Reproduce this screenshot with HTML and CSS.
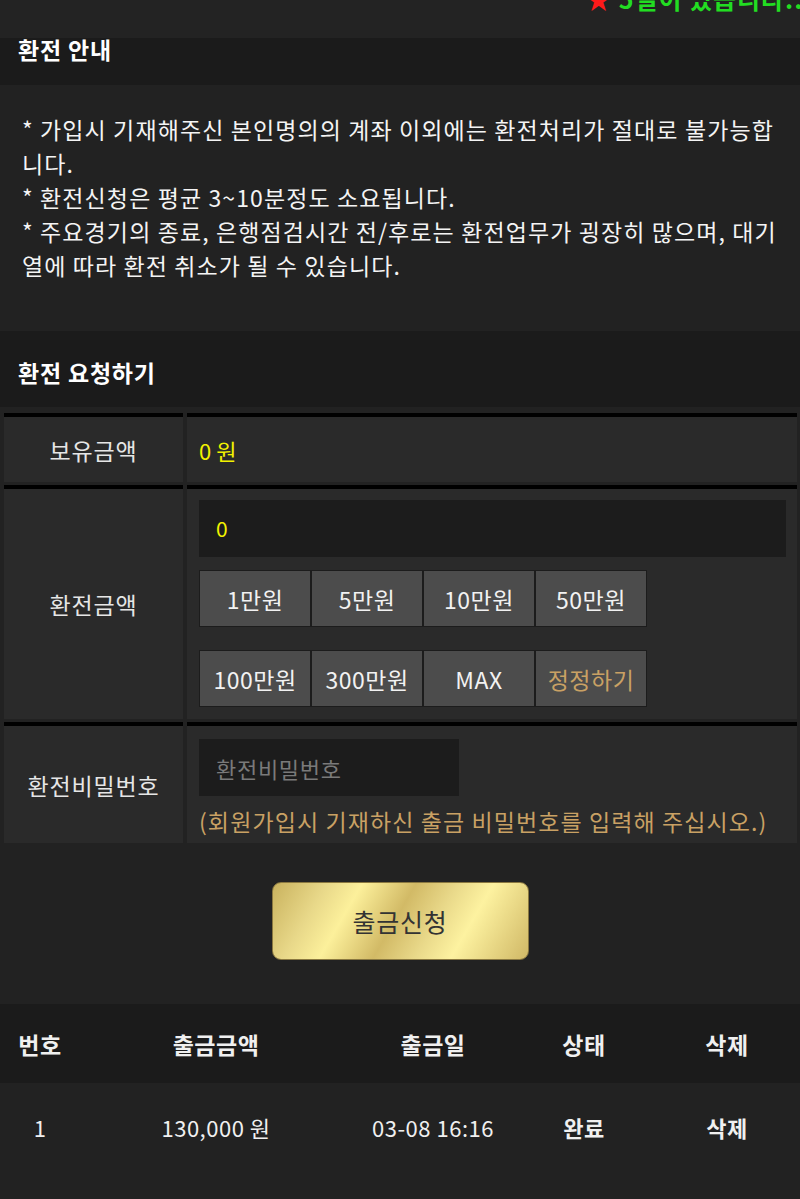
FILE: index.html
```html
<!DOCTYPE html>
<html>
<head>
  <title>환전 신청</title>
  <link rel="stylesheet" href="styles.css">
</head>
<body>
  <div class="topbar">
    <div class="notice-line"><span class="star">★</span> 5일이 있습니다.:</div>
  </div>

  <div class="section-title first">환전 안내</div>
  <div class="guide">
    <p>* 가입시 기재해주신 본인명의의 계좌 이외에는 환전처리가 절대로 불가능합니다.</p>
    <p>* 환전신청은 평균 3~10분정도 소요됩니다.</p>
    <p>* 주요경기의 종료, 은행점검시간 전/후로는 환전업무가 굉장히 많으며, 대기열에 따라 환전 취소가 될 수 있습니다.</p>
  </div>

  <div class="section-title second">환전 요청하기</div>
  <div class="form-table">
    <div class="cell label row-money">보유금액</div>
    <div class="cell value row-money"><span class="yellow">0 원</span></div>

    <div class="cell label">환전금액</div>
    <div class="cell value amount-cell">
      <div class="amount-input">0</div>
      <div class="btn-group">
        <button type="button" class="amt">1만원</button>
        <button type="button" class="amt">5만원</button>
        <button type="button" class="amt">10만원</button>
        <button type="button" class="amt">50만원</button>
      </div>
      <div class="btn-group">
        <button type="button" class="amt">100만원</button>
        <button type="button" class="amt">300만원</button>
        <button type="button" class="amt">MAX</button>
        <button type="button" class="amt gold">정정하기</button>
      </div>
    </div>

    <div class="cell label">환전비밀번호</div>
    <div class="cell value pw-cell">
      <input type="password" class="pw-input" placeholder="환전비밀번호">
      <div class="hint">(회원가입시 기재하신 출금 비밀번호를 입력해 주십시오.)</div>
    </div>
  </div>

  <div class="submit-wrap">
    <button type="button" class="submit">출금신청</button>
  </div>

  <div class="history">
    <div class="history-row head">
      <div>번호</div>
      <div>출금금액</div>
      <div>출금일</div>
      <div>상태</div>
      <div>삭제</div>
    </div>
    <div class="history-row">
      <div>1</div>
      <div>130,000 원</div>
      <div>03-08 16:16</div>
      <div class="bold">완료</div>
      <div class="bold">삭제</div>
    </div>
  </div>
</body>
</html>
```

FILE: styles.css
```css
body {
  margin: 0;
  background-color: #222222;
  color: #f0f0f0;
  font-family: "Noto Sans CJK KR", "Noto Sans", sans-serif;
}
.topbar {
  height: 38px;
  overflow: hidden;
  background-color: #232323;
}
.notice-line {
  margin-top: -18px;
  padding-left: 586px;
  white-space: nowrap;
  font-size: 25px;
  line-height: 32px;
  letter-spacing: 1px;
  color: #22dd22;
  font-weight: bold;
}
.star {
  color: #ff1a1a;
}
.section-title {
  background-color: #1b1b1b;
  font-size: 23px;
  letter-spacing: 0.8px;
  font-weight: bold;
  color: #ffffff;
  padding-left: 18px;
}
.section-title.first {
  height: 47px;
  line-height: 22px;
}
.section-title.second {
  height: 76px;
  line-height: 82px;
}
.guide {
  padding: 27px 22px 49px 22px;
  font-size: 23px;
  letter-spacing: 1.1px;
  line-height: 34px;
  color: #f4f4f4;
}
.guide p {
  margin: 0;
}
.form-table {
  display: grid;
  grid-template-columns: 179px 1fr;
  gap: 3px 4px;
  padding: 6px 3px 0 4px;
}
.cell {
  background-color: #2a2a2a;
  border-top: 4px solid #000000;
}
.label {
  display: flex;
  align-items: center;
  justify-content: center;
  font-size: 23px;
  letter-spacing: 0.8px;
  color: #e6e6e6;
}
.value {
  padding: 11px 11px 11px 12px;
}
.row-money {
  height: 65px;
  padding-top: 0;
  padding-bottom: 0;
  display: flex;
  align-items: center;
}
.yellow {
  color: #f2f200;
  font-size: 22px;
}
.amount-cell {
  padding-bottom: 12px;
}
.amount-input {
  height: 57px;
  line-height: 57px;
  background-color: #1c1c1c;
  color: #f2f200;
  font-size: 21px;
  padding-left: 17px;
  margin-bottom: 13px;
}
.btn-group {
  display: flex;
  width: max-content;
  gap: 2px;
  background-color: #1c1c1c;
  padding: 1px;
}
.btn-group + .btn-group {
  margin-top: 23px;
}
.amt {
  width: 110px;
  height: 55px;
  border: none;
  background-color: #4c4c4c;
  color: #f2f2f2;
  font-family: inherit;
  font-size: 23px;
  letter-spacing: 0.5px;
  padding: 0;
}
.amt.gold {
  color: #c9a164;
}
.pw-cell {
  padding-top: 13px;
  padding-bottom: 8px;
}
.pw-input {
  display: block;
  width: 260px;
  height: 57px;
  box-sizing: border-box;
  border: none;
  background-color: #1c1c1c;
  color: #ddd;
  font-family: inherit;
  font-size: 22px;
  letter-spacing: 0.7px;
  padding-left: 17px;
}
.pw-input::placeholder {
  color: #7a7a7a;
}
.hint {
  margin-top: 11px;
  color: #c9a164;
  font-size: 23px;
  letter-spacing: 1.1px;
  line-height: 28px;
  white-space: nowrap;
}
.submit-wrap {
  display: flex;
  justify-content: center;
  padding: 39px 0 44px 0;
}
.submit {
  width: 257px;
  height: 78px;
  border: 1px solid #8a7840;
  border-radius: 9px;
  background: linear-gradient(120deg, #c9b25e 0%, #e8d889 18%, #fcf09b 30%, #d2ba66 48%, #e9d98a 62%, #fdf2a0 74%, #d0b866 100%);
  color: #333333;
  font-family: inherit;
  font-size: 25px;
  letter-spacing: 0.8px;
}
.history-row {
  display: grid;
  grid-template-columns: 80px 272px 162px 140px 146px;
  align-items: center;
  text-align: center;
  font-size: 22px;
  letter-spacing: 0.5px;
  height: 88px;
}
.history-row.head {
  height: 79px;
  background-color: #1b1b1b;
  font-size: 23px;
  font-weight: bold;
}
.bold {
  font-weight: bold;
}
```
